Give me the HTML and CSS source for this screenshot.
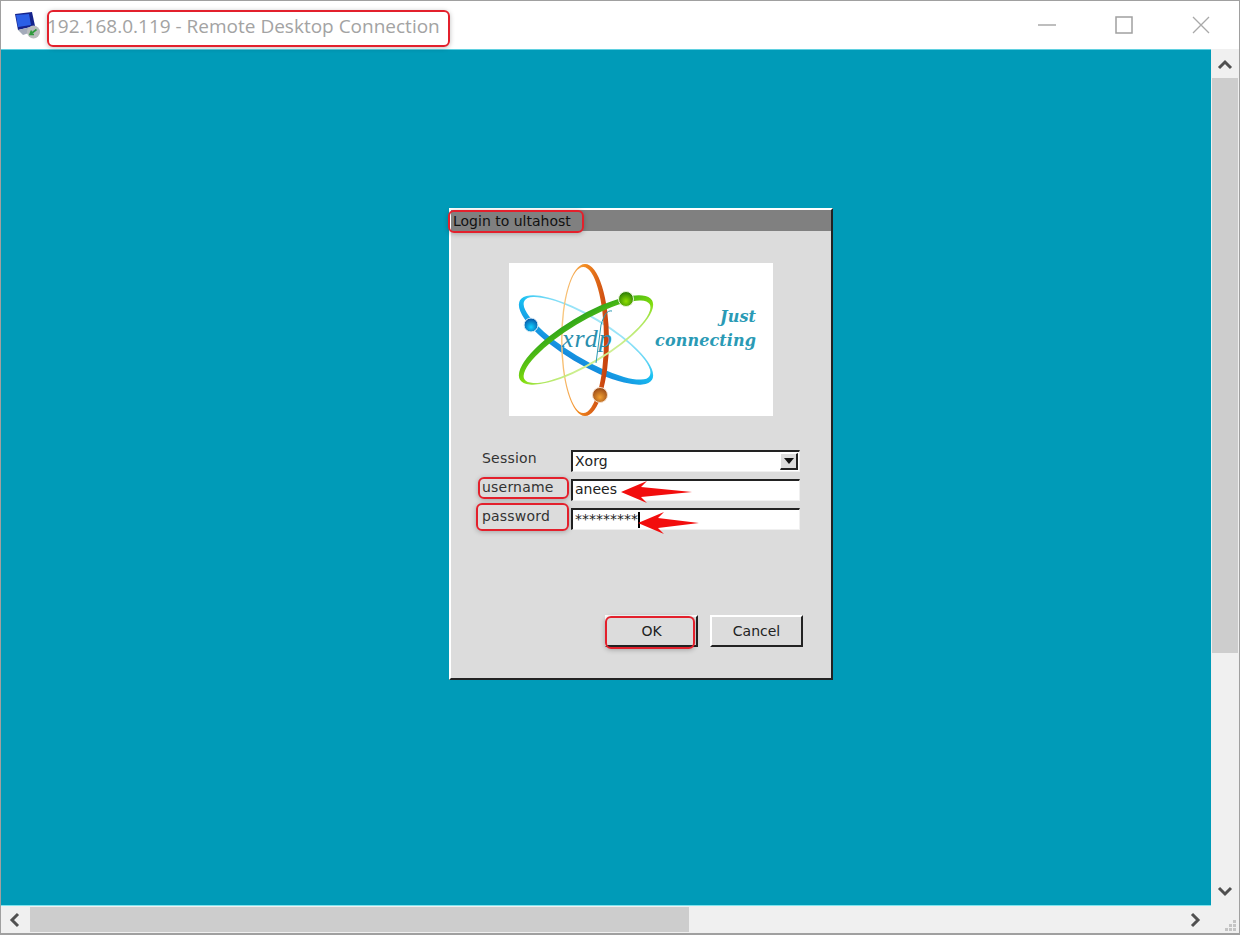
FILE: index.html
```html
<!DOCTYPE html>
<html lang="en">

<head>
    <meta charset="UTF-8">
    <title>192.168.0.119 - Remote Desktop Connection</title>
    <link rel="stylesheet" href="styles.css">
</head>

<body>
    <div class="window">
        <header class="titlebar">
            <svg class="app-icon" width="28" height="28" viewBox="0 0 28 28">
                <polygon points="1,3 18,1 21,15 4,19" fill="#15238c" />
                <polygon points="2,4 15,3 17,14 4,16" fill="#2b5fe6" />
                <polygon points="4,19 21,15 24,19 9,24" fill="#a4abba" />
                <circle cx="19.5" cy="21" r="6.5" fill="#b9bcbc" />
                <path d="M16 23.5 L22.5 18.5 M17.5 19.5 L16 23.5 L20 23.5" stroke="#2f9a3c" stroke-width="1.6" fill="none" />
            </svg>
            <span class="title-text">192.168.0.119 - Remote Desktop Connection</span>
            <div class="window-controls">
                <svg width="18" height="18" viewBox="0 0 18 18">
                    <line x1="0" y1="9" x2="18" y2="9" stroke="#a9a9a9" stroke-width="1.5" />
                </svg>
                <svg width="18" height="18" viewBox="0 0 18 18">
                    <rect x="1" y="1" width="16" height="16" fill="none" stroke="#a0a0a0" stroke-width="1.5" />
                </svg>
                <svg width="18" height="18" viewBox="0 0 18 18">
                    <path d="M1 1 L17 17 M17 1 L1 17" stroke="#a9a9a9" stroke-width="1.3" />
                </svg>
            </div>
        </header>

        <div class="client">
            <main class="desktop">
                <section class="dialog">
                    <div class="dialog-title">Login to ultahost</div>

                    <svg class="logo" width="264" height="153" viewBox="0 0 264 153">
                        <defs>
                            <linearGradient id="orange" x1="0" y1="0" x2="1" y2="0.15">
                                <stop offset="0" stop-color="#f9d596" />
                                <stop offset="0.5" stop-color="#f28a20" />
                                <stop offset="1" stop-color="#c9440f" />
                            </linearGradient>
                            <linearGradient id="blue" x1="0" y1="0" x2="0" y2="1">
                                <stop offset="0" stop-color="#a8e8f8" />
                                <stop offset="0.45" stop-color="#18c0f2" />
                                <stop offset="1" stop-color="#1488dc" />
                            </linearGradient>
                            <linearGradient id="green" x1="0" y1="0" x2="0" y2="1">
                                <stop offset="0" stop-color="#2fa51a" />
                                <stop offset="0.55" stop-color="#7fdc0c" />
                                <stop offset="1" stop-color="#d4f09c" />
                            </linearGradient>
                            <radialGradient id="ball-blue" cx="0.5" cy="0.65" r="0.6">
                                <stop offset="0" stop-color="#12d0ff" />
                                <stop offset="1" stop-color="#0557a8" />
                            </radialGradient>
                            <radialGradient id="ball-green" cx="0.5" cy="0.65" r="0.6">
                                <stop offset="0" stop-color="#8fe000" />
                                <stop offset="1" stop-color="#2c7d05" />
                            </radialGradient>
                            <radialGradient id="ball-orange" cx="0.5" cy="0.65" r="0.6">
                                <stop offset="0" stop-color="#f2a032" />
                                <stop offset="1" stop-color="#9a4a18" />
                            </radialGradient>
                        </defs>
                        <path transform="translate(77 77) rotate(31)" fill="url(#blue)" fill-rule="evenodd"
                            d="M-77 0 A77 24 0 1 0 77 0 A77 24 0 1 0 -77 0 Z M-73 -2 A73 20 0 1 0 73 -2 A73 20 0 1 0 -73 -2 Z" />
                        <path transform="translate(76 77)" fill="url(#orange)" fill-rule="evenodd"
                            d="M-24 0 A24 76 0 1 0 24 0 A24 76 0 1 0 -24 0 Z M-22.5 0 A20.75 73 0 1 0 19 0 A20.75 73 0 1 0 -22.5 0 Z" />
                        <path transform="translate(77 77) rotate(-31)" fill="url(#green)" fill-rule="evenodd"
                            d="M-77 0 A77 24 0 1 0 77 0 A77 24 0 1 0 -77 0 Z M-73 2 A73 20 0 1 0 73 2 A73 20 0 1 0 -73 2 Z" />
                        <circle cx="22" cy="62" r="7" fill="url(#ball-blue)" stroke="#e6f4fa" stroke-width="1" />
                        <circle cx="117" cy="36" r="7.5" fill="url(#ball-green)" stroke="#e6f4d8" stroke-width="1" />
                        <circle cx="91" cy="132" r="7.5" fill="url(#ball-orange)" stroke="#f4dcc8" stroke-width="1" />
                        <text class="logo-xrdp" x="53" y="84">xrdp</text>
                        <path d="M92 62 C95 52 98 47 103 48 M92 62 L87 100" stroke="#2a9ab5" stroke-width="1" fill="none" />
                        <text class="logo-tag" x="247" y="59" text-anchor="end">Just</text>
                        <text class="logo-tag" x="247" y="83" text-anchor="end">connecting</text>
                    </svg>

                    <div class="form">
                        <label class="field-label">Session</label>
                        <div class="sunken combo">
                            <span>Xorg</span>
                            <span class="combo-arrow"></span>
                        </div>
                        <label class="field-label">username</label>
                        <div class="sunken field-text">anees</div>
                        <label class="field-label">password</label>
                        <div class="sunken"><span class="secret">*********</span><span class="caret"></span></div>
                    </div>

                    <div class="dialog-buttons">
                        <button class="raised">OK</button>
                        <button class="raised">Cancel</button>
                    </div>
                </section>
            </main>

            <aside class="scroll-v">
                <svg class="arrow" width="16" height="14" viewBox="0 0 16 14">
                    <path d="M2 10 L8 4 L14 10" />
                </svg>
                <div class="thumb-v"></div>
                <svg class="arrow" width="16" height="14" viewBox="0 0 16 14">
                    <path d="M2 4 L8 10 L14 4" />
                </svg>
            </aside>

            <div class="scroll-h">
                <svg class="arrow" width="14" height="16" viewBox="0 0 14 16">
                    <path d="M10 2 L4 8 L10 14" />
                </svg>
                <div class="thumb-h"></div>
                <svg class="arrow" width="14" height="16" viewBox="0 0 14 16">
                    <path d="M4 2 L10 8 L4 14" />
                </svg>
            </div>

            <div class="grip">
                <svg width="12" height="12" viewBox="0 0 12 12" fill="#c4c4c4">
                    <rect x="8" y="0" width="3" height="3" />
                    <rect x="4" y="4" width="3" height="3" />
                    <rect x="8" y="4" width="3" height="3" />
                    <rect x="0" y="8" width="3" height="3" />
                    <rect x="4" y="8" width="3" height="3" />
                    <rect x="8" y="8" width="3" height="3" />
                </svg>
            </div>
        </div>

        <!-- red markup drawn over the screenshot -->
        <div class="mark mark-title"></div>
        <div class="mark mark-login"></div>
        <div class="mark mark-user"></div>
        <div class="mark mark-pass"></div>
        <div class="mark mark-ok"></div>
        <svg class="red-arrow arrow-user" width="72" height="24" viewBox="0 0 72 24">
            <polygon points="0,12 26,1 20,7 71,12 20,17 26,23" />
        </svg>
        <svg class="red-arrow arrow-pass" width="62" height="24" viewBox="0 0 62 24">
            <polygon points="0,12 26,1 20,7 61,12 20,17 26,23" />
        </svg>
    </div>
</body>

</html>
```

FILE: styles.css
```css
:root {
    --teal: #009bb8;
    --panel: #dcdcdc;
    --edge-dark: #222222;
    --mark-red: #e3202c;
    --track: #f0f0f0;
    --thumb: #cdcdcd;
}

* {
    box-sizing: border-box;
    margin: 0;
    padding: 0;
}

body {
    background-color: #ffffff;
    overflow: hidden;
}

.window {
    position: relative;
    width: 1240px;
    height: 935px;
    border-top: 1px solid #a0a0a0;
    border-left: 1px solid #a0a0a0;
    border-right: 1px solid #a0a0a0;
    border-bottom: 2px solid #a0a0a0;
    display: flex;
    flex-direction: column;
}

.titlebar {
    height: 48px;
    display: flex;
    align-items: center;
    padding-left: 13px;
}

.app-icon {
    flex: none;
    margin-right: 5px;
}

.title-text {
    font-family: "Open Sans", sans-serif;
    font-size: 19px;
    color: #a3a3a3;
    white-space: nowrap;
    padding-top: 2px;
}

.window-controls {
    margin-left: auto;
    display: flex;
    gap: 59px;
    padding-right: 29px;
}

.client {
    flex: 1;
    display: grid;
    grid-template-columns: 1fr 28px;
    grid-template-rows: 1fr 27px;
    min-height: 0;
}

.desktop {
    background-color: var(--teal);
    padding: 158px 0 0 448px;
    border-top: 1px solid #5fd0e0;
    border-bottom: 1px solid #7fe4ee;
    overflow: hidden;
}

/* xrdp login box */
.dialog {
    width: 384px;
    height: 472px;
    background-color: var(--panel);
    border-top: 2px solid #ffffff;
    border-left: 2px solid #ffffff;
    border-right: 2px solid var(--edge-dark);
    border-bottom: 2px solid var(--edge-dark);
    display: flex;
    flex-direction: column;
    font-family: "DejaVu Sans", sans-serif;
    font-size: 14px;
    color: #1a1a1a;
}

.dialog-title {
    height: 21px;
    line-height: 23px;
    background-color: #808080;
    padding-left: 2px;
    color: #111111;
}

.logo {
    display: block;
    background-color: #ffffff;
    margin: 32px auto 0;
}

.logo-xrdp {
    font-family: "Liberation Serif", serif;
    font-style: italic;
    font-size: 26px;
    letter-spacing: 1px;
    fill: #2a8fae;
}

.logo-tag {
    font-family: "DejaVu Serif", serif;
    font-style: italic;
    font-weight: 600;
    font-size: 16px;
    letter-spacing: 0.1px;
    fill: #2a9ab5;
}

.form {
    margin-top: 34px;
    padding: 0 31px;
    display: grid;
    grid-template-columns: 89px 1fr;
    grid-auto-rows: 22px;
    row-gap: 7px;
}

.field-label {
    line-height: 16px;
    color: #333333;
    letter-spacing: 0.2px;
}

.sunken {
    background-color: #ffffff;
    border-top: 2px solid var(--edge-dark);
    border-left: 2px solid var(--edge-dark);
    border-right: 1px solid #f0f0f0;
    border-bottom: 1px solid #f0f0f0;
    line-height: 19px;
    padding-left: 2px;
    display: flex;
    align-items: center;
    color: #222222;
}

.field-text {
    padding-bottom: 2px;
}

.combo {
    justify-content: space-between;
    padding-right: 1px;
}

.combo-arrow {
    width: 18px;
    height: 17px;
    background-color: var(--panel);
    border-top: 1px solid #ffffff;
    border-left: 1px solid #ffffff;
    border-right: 2px solid var(--edge-dark);
    border-bottom: 2px solid var(--edge-dark);
    position: relative;
}

.combo-arrow::after {
    content: "";
    position: absolute;
    left: 3px;
    top: 4px;
    border-left: 5px solid transparent;
    border-right: 5px solid transparent;
    border-top: 6px solid #111111;
}

.caret {
    width: 2px;
    height: 16px;
    background-color: #000000;
}

.secret {
    letter-spacing: 0;
}

.dialog-buttons {
    margin-top: 85px;
    padding-right: 28px;
    display: flex;
    justify-content: flex-end;
    gap: 12px;
}

.raised {
    width: 93px;
    height: 32px;
    background-color: var(--panel);
    border-top: 2px solid #ffffff;
    border-left: 2px solid #ffffff;
    border-right: 2px solid var(--edge-dark);
    border-bottom: 2px solid var(--edge-dark);
    font-family: "DejaVu Sans", sans-serif;
    font-size: 14px;
    color: #222222;
}

/* scrollbars */
.scroll-v {
    background-color: var(--track);
    display: flex;
    flex-direction: column;
    align-items: center;
}

.scroll-v .arrow:first-child {
    margin: 9px 0 6px;
}

.thumb-v {
    width: 26px;
    height: 575px;
    margin-top: 0;
    background-color: var(--thumb);
}

.scroll-v .arrow:last-child {
    margin-top: auto;
    margin-bottom: 8px;
}

.scroll-h {
    background-color: var(--track);
    display: flex;
    align-items: center;
    padding: 0 9px 0 7px;
    height: 27px;
}

.thumb-h {
    width: 659px;
    height: 25px;
    margin-left: 8px;
    background-color: var(--thumb);
}

.scroll-h .arrow:last-child {
    margin-left: auto;
}

.arrow path {
    fill: none;
    stroke: #505050;
    stroke-width: 3;
}

.grip {
    background-color: var(--track);
    display: flex;
    justify-content: flex-end;
    align-items: flex-end;
    padding: 0 2px 1px 0;
}

/* annotations */
.mark {
    position: absolute;
    border: 2px solid var(--mark-red);
    border-radius: 6px;
    box-shadow: 0 1px 5px rgba(0, 0, 0, 0.25);
}

.mark-title {
    left: 46px;
    top: 9px;
    width: 403px;
    height: 37px;
}

.mark-login {
    left: 447px;
    top: 209px;
    width: 136px;
    height: 23px;
}

.mark-user {
    left: 477px;
    top: 476px;
    width: 91px;
    height: 22px;
}

.mark-pass {
    left: 475px;
    top: 502px;
    width: 93px;
    height: 28px;
}

.mark-ok {
    left: 604px;
    top: 615px;
    width: 90px;
    height: 33px;
}

.red-arrow {
    position: absolute;
}

.red-arrow polygon {
    fill: #f20d0d;
}

.arrow-user {
    left: 620px;
    top: 479px;
}

.arrow-pass {
    left: 637px;
    top: 510px;
}
```
